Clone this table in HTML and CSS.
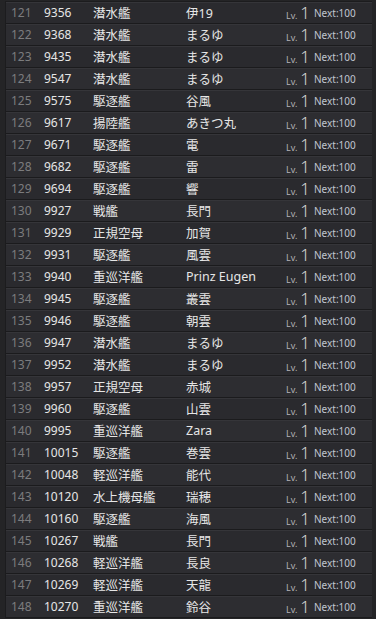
FILE: index.html
```
<!DOCTYPE html>
<html>
<head>
<meta charset="utf-8">
<link rel="stylesheet" href="styles.css">
</head>
<body>
<div class="list" id="list"></div>
<script>
const data = [
[121,9356,"潜水艦","伊19"],[122,9368,"潜水艦","まるゆ"],[123,9435,"潜水艦","まるゆ"],[124,9547,"潜水艦","まるゆ"],
[125,9575,"駆逐艦","谷風"],[126,9617,"揚陸艦","あきつ丸"],[127,9671,"駆逐艦","電"],[128,9682,"駆逐艦","雷"],
[129,9694,"駆逐艦","響"],[130,9927,"戦艦","長門"],[131,9929,"正規空母","加賀"],[132,9931,"駆逐艦","風雲"],
[133,9940,"重巡洋艦","Prinz Eugen"],[134,9945,"駆逐艦","叢雲"],[135,9946,"駆逐艦","朝雲"],[136,9947,"潜水艦","まるゆ"],
[137,9952,"潜水艦","まるゆ"],[138,9957,"正規空母","赤城"],[139,9960,"駆逐艦","山雲"],[140,9995,"重巡洋艦","Zara"],
[141,10015,"駆逐艦","巻雲"],[142,10048,"軽巡洋艦","能代"],[143,10120,"水上機母艦","瑞穂"],[144,10160,"駆逐艦","海風"],
[145,10267,"戦艦","長門"],[146,10268,"軽巡洋艦","長良"],[147,10269,"軽巡洋艦","天龍"],[148,10270,"重巡洋艦","鈴谷"]
];
const list = document.getElementById('list');
data.forEach(([i,id,t,n]) => {
  const r = document.createElement('div');
  r.className = 'row';
  r.innerHTML = `<span class="idx">${i}</span><span class="id">${id}</span><span class="type">${t}</span><span class="name">${n}</span><span class="lv"><span class="lvl">Lv.</span><span class="lvn">1</span></span><span class="next">Next:100</span>`;
  list.appendChild(r);
});
</script>
</body>
</html>
```
FILE: styles.css
```
html, body { margin: 0; padding: 0; }
body {
  background: #242426;
  width: 376px;
  height: 619px;
  overflow: hidden;
  font-family: "Noto Sans", "Noto Sans CJK JP", sans-serif;
}
.list {
  margin-left: 5px;
  margin-top: 1px;
  width: 366px;
  border-left: 1px solid #1c1c1e;
  border-top: 1px solid #1c1c1e;
}
.row {
  display: flex;
  align-items: center;
  height: 21px;
  border-bottom: 1px solid #1b1b1d;
  box-shadow: inset 0 1px 0 #353539;
  background: #2a2a2e;
  color: #e6e6e6;
  font-size: 12px;
}
.row:nth-child(even) { background: #2d2d31; }
.idx { width: 38px; padding-left: 5px; box-sizing: border-box; color: #7c7c7e; }
.id { width: 49px; }
.type { width: 93px; font-family: "Noto Sans CJK JP", sans-serif; font-size: 12.5px; }
.name { width: 100px; font-family: "Noto Sans", "Noto Sans CJK JP", sans-serif; font-size: 12.5px; }
.lv { display: flex; align-items: baseline; width: 28px; }
.lvl { font-size: 9px; color: #b4b4b6; margin-right: 3px; }
.lvn { font-size: 17px; line-height: 17px; color: #e0e0e0; font-family: "Open Sans", sans-serif; font-weight: 300; }
.next { font-size: 10px; color: #c0c6d0; }
```
